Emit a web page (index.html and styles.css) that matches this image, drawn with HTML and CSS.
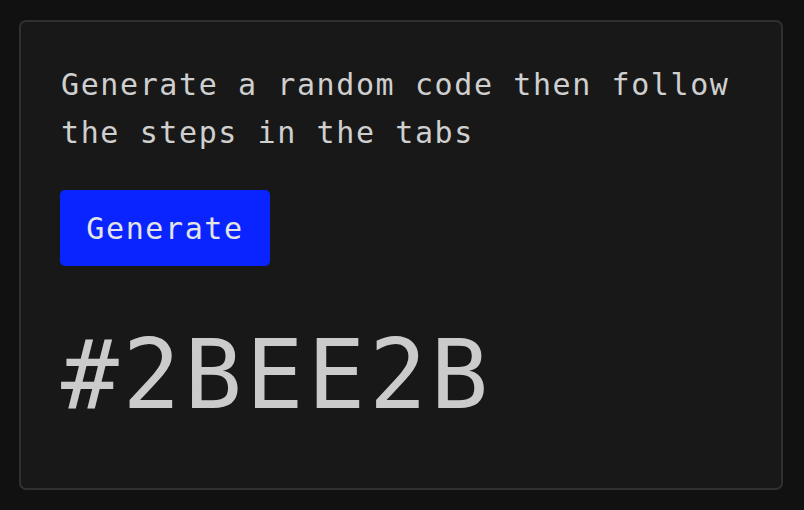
FILE: index.html
```html
<!DOCTYPE html>
<html>
<head>
<meta charset="utf-8">
<link rel="stylesheet" href="styles.css">
</head>
<body>
<div class="card">
  <p class="intro">Generate a random code then follow the steps in the tabs</p>
  <button class="btn">Generate</button>
  <div class="code">#2BEE2B</div>
</div>
</body>
</html>
```

FILE: styles.css
```css
html, body {
  margin: 0;
  background: #111111;
}
body {
  padding: 20px 21px 20px 19px;
  font-family: "DejaVu Sans Mono", monospace;
}
.card {
  box-sizing: border-box;
  height: 470px;
  background: #181818;
  border: 2px solid #303030;
  border-radius: 7px;
  padding: 39px 40px 39px 39px;
  display: flex;
  flex-direction: column;
  align-items: flex-start;
}
.intro {
  margin: 0 0 0 1px;
  width: 680px;
  font-size: 30px;
  line-height: 48px;
  letter-spacing: 1.6px;
  color: #cfcfcf;
}
.btn {
  margin-top: 33px;
  background: #0a24ff;
  border: none;
  border-radius: 5px;
  width: 210px;
  height: 76px;
  padding: 0;
  font-family: inherit;
  font-size: 30px;
  letter-spacing: 1.6px;
  color: #e4e4e4;
}
.code {
  margin-top: 61px;
  margin-left: 1px;
  font-size: 96px;
  line-height: 96px;
  letter-spacing: 3.8px;
  color: #cbcbcb;
}
```
